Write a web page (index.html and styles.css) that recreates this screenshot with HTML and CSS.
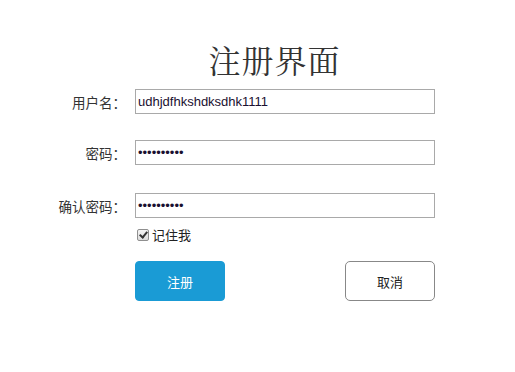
FILE: index.html
```html
<!DOCTYPE html>
<html lang="zh-CN">
<head>
<meta charset="utf-8">
<title>注册界面</title>
<link rel="stylesheet" href="styles.css">
</head>
<body>
<div class="page">
  <h1 class="title">注册界面</h1>
  <form class="form">
    <div class="row row-user">
      <label class="label" for="u">用户名：</label>
      <input class="field" id="u" type="text" value="udhjdfhkshdksdhk1111">
    </div>
    <div class="row row-pass">
      <label class="label" for="p">密码：</label>
      <input class="field" id="p" type="password" value="1234567890">
    </div>
    <div class="row row-confirm">
      <label class="label" for="c">确认密码：</label>
      <input class="field" id="c" type="password" value="1234567890">
    </div>
    <div class="row row-remember">
      <span class="label"></span>
      <label class="remember"><input class="check" type="checkbox" checked><span>记住我</span></label>
    </div>
    <div class="row row-buttons">
      <span class="label"></span>
      <div class="buttons">
        <button type="button" class="btn btn-primary">注册</button>
        <button type="button" class="btn btn-cancel">取消</button>
      </div>
    </div>
  </form>
</div>
</body>
</html>
```
FILE: styles.css
```css
html, body {
  margin: 0;
  padding: 0;
  background: #ffffff;
}
.page {
  width: 515px;
  height: 372px;
  font-family: "Liberation Sans", "Noto Sans CJK SC", sans-serif;
  color: #222;
}
.title {
  margin: 0;
  padding-top: 39px;
  padding-left: 34px;
  text-align: center;
  font-family: "Noto Serif CJK SC", "Liberation Serif", "Noto Sans CJK SC", serif;
  font-weight: normal;
  font-size: 32px;
  line-height: 40px;
  height: 40px;
  color: #333;
  letter-spacing: 1px;
}
.form {
  display: flex;
  flex-direction: column;
  margin: 0;
}
.row {
  display: flex;
  align-items: center;
}
.row-user { margin-top: 10px; }
.row-pass { margin-top: 26px; }
.row-confirm { margin-top: 28px; }
.row-remember { margin-top: 7px; }
.row-buttons { margin-top: 17px; }
.label {
  width: 126px;
  flex: none;
  text-align: right;
  font-size: 13.5px;
  color: #333;
  margin-right: 9px;
  font-family: "Noto Sans CJK SC", sans-serif;
}
.field {
  box-sizing: border-box;
  width: 300px;
  height: 25px;
  margin: 0;
  border: 1px solid #a9a9a9;
  padding: 0 2px;
  font-family: "Liberation Sans", "Noto Sans CJK SC", sans-serif;
  font-size: 13px;
  color: #1a1030;
  outline: none;
}
.remember {
  display: flex;
  align-items: center;
  font-size: 13px;
  color: #222;
  font-family: "Noto Sans CJK SC", sans-serif;
}
.check {
  appearance: none;
  -webkit-appearance: none;
  box-sizing: border-box;
  width: 12px;
  height: 12px;
  margin: 0 3px 0 2px;
  border: 1px solid #8f8f8f;
  border-radius: 2px;
  background: linear-gradient(#f4f4f4, #dcdcdc);
  position: relative;
}
.check::after {
  content: "";
  position: absolute;
  left: 3px;
  top: 0px;
  width: 3px;
  height: 6px;
  border: solid #333;
  border-width: 0 2px 2px 0;
  transform: rotate(40deg);
}
.buttons {
  display: flex;
  justify-content: space-between;
  width: 300px;
}
.btn {
  box-sizing: border-box;
  width: 90px;
  height: 40px;
  margin: 0;
  font-family: "Noto Sans CJK SC", sans-serif;
  font-size: 13px;
  cursor: pointer;
}
.btn-primary {
  background: #1a9bd5;
  border: 1px solid #1a9bd5;
  border-radius: 4px;
  color: #fff;
}
.btn-cancel {
  background: #fff;
  border: 1px solid #888;
  border-radius: 5px;
  color: #222;
}
```
